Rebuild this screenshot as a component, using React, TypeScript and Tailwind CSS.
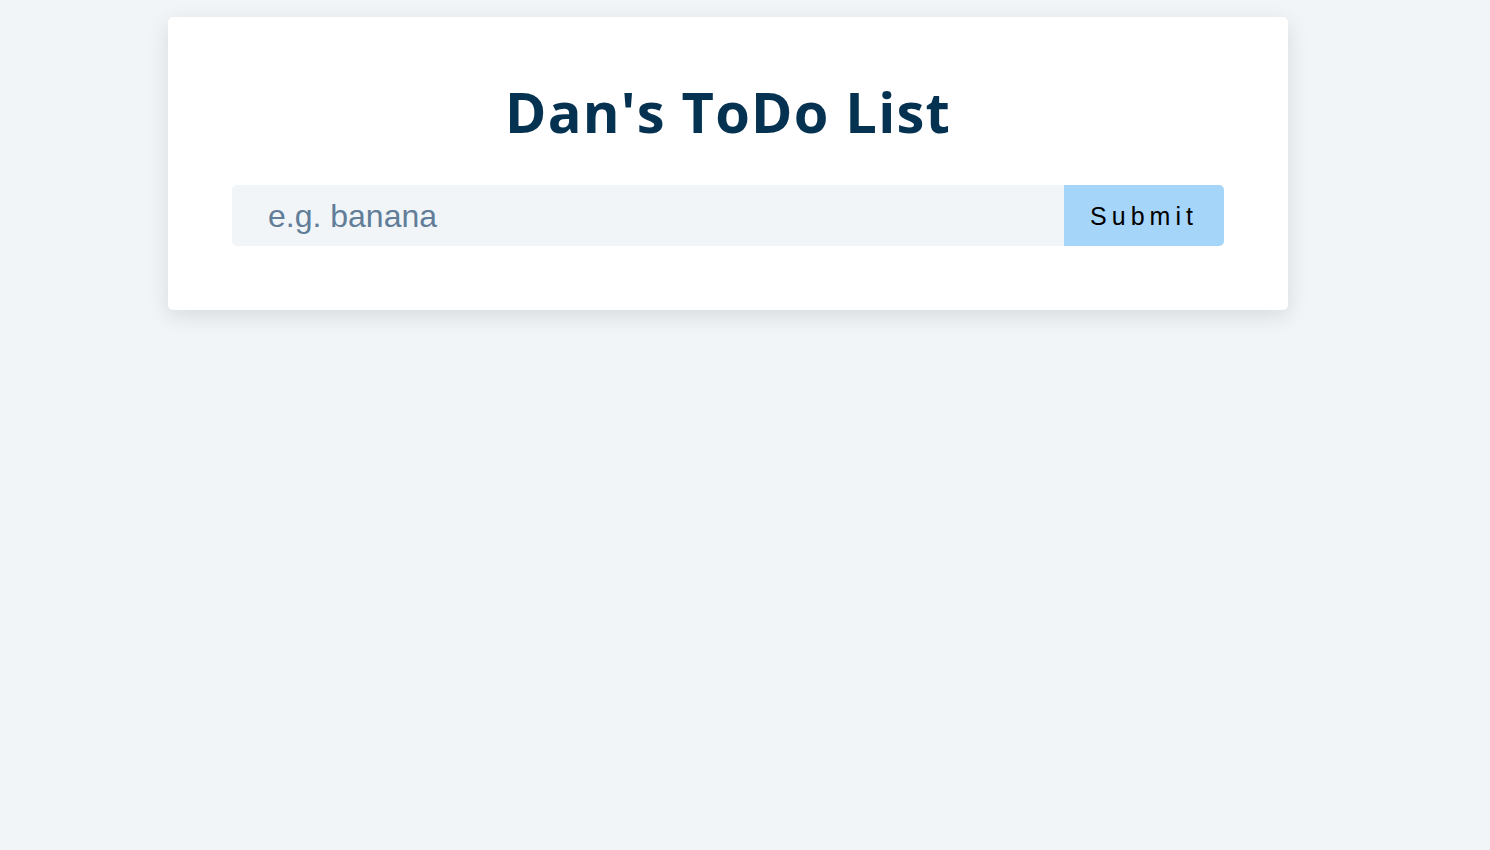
import { useState } from 'react';

export default function App() {
    const [item, setItem] = useState('');

    return (
        <div className="min-h-[850px] w-full bg-[#f1f5f8] pt-[17px]">
            <section className="ml-[168px] w-[1120px] rounded-[5px] bg-white px-16 pt-[66px] pb-[64px] shadow-[0_6px_22px_rgba(0,0,0,0.11)]">
                <h3 className="mb-[46px] text-center font-['Open_Sans',sans-serif] text-[56px] leading-none font-bold tracking-[1.2px] text-[#063251]">
                    Dan's ToDo List
                </h3>

                <form className="flex h-[61px]" onSubmit={(e) => e.preventDefault()}>
                    <input
                        type="text"
                        value={item}
                        onChange={(e) => setItem(e.target.value)}
                        placeholder="e.g. banana"
                        className="min-w-0 flex-1 rounded-l-[5px] bg-[#f1f5f8] pl-9 font-['Liberation_Sans',Arial,sans-serif] text-[32px] text-[#617d98] outline-none placeholder:text-[#617d98]"
                    />
                    <button
                        type="submit"
                        className="w-[160px] rounded-r-[5px] bg-[#a5d5f8] pt-[2px] font-['Liberation_Sans',Arial,sans-serif] text-[25px] tracking-[5px] text-black"
                    >
                        Submit
                    </button>
                </form>
            </section>
        </div>
    );
}
